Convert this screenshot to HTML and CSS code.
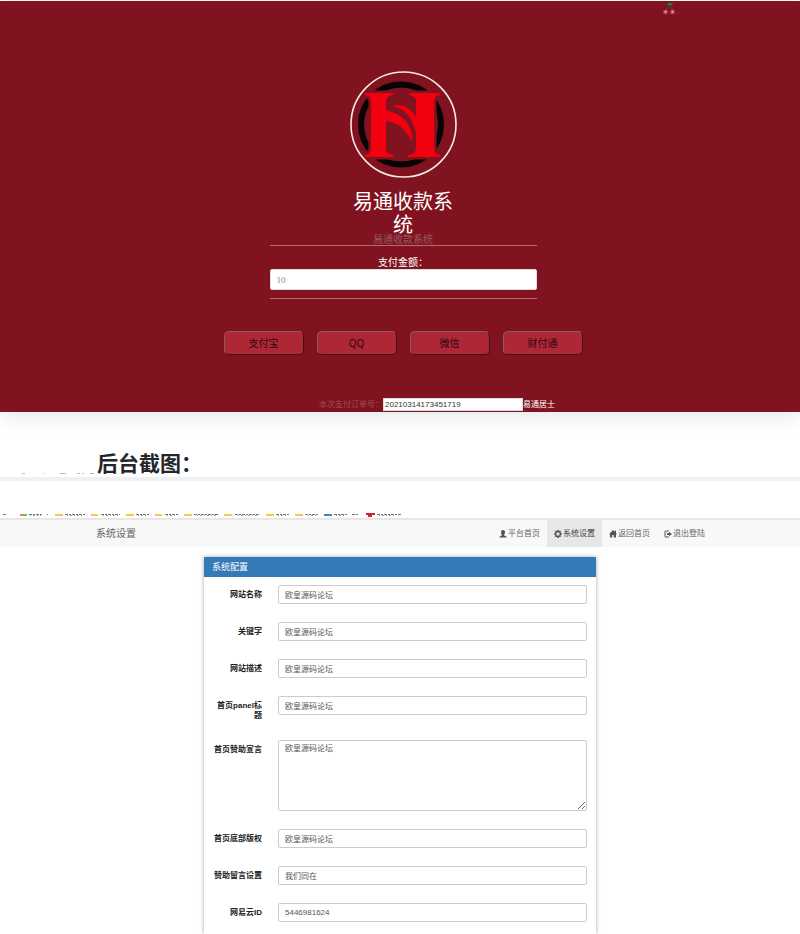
FILE: index.html
```html
<!DOCTYPE html>
<html lang="zh-CN">
<head>
<meta charset="utf-8">
<meta name="viewport" content="width=device-width, initial-scale=1">
<title>易通收款系统</title>
<link rel="stylesheet" href="styles.css">
</head>
<body>
<main class="hero">
  <svg class="cherry" viewBox="0 0 14 14" aria-hidden="true">
    <path d="M8 3 4 9M8 3l2.500 6" fill="none" stroke="#2d5a35"/>
    <path d="M5.500 3Q7 1 11 2 10 5 5.500 4z" fill="#168a4b"/>
    <circle cx="3.500" cy="11" r="2.500" fill="#b83a4b"/><circle cx="10.500" cy="11" r="2.500" fill="#b83a4b"/>
    <circle cx="3.500" cy="10.800" r="1" fill="#f3b5b8"/><circle cx="10.500" cy="10.800" r="1" fill="#f3b5b8"/>
  </svg>
  <svg class="logo" viewBox="0 0 107 107" role="img" aria-label="易通">
    <circle cx="51" cy="53.500" r="40" fill="none" stroke="#080304" stroke-width="6"/>
    <g fill="#f2000f">
      <g stroke="#81121f" stroke-width="5" paint-order="stroke">
        <path d="M15 22H43V24Q36 25 36 30V77Q36 83 43 84V86H15V84Q21 83 21 77V31Q21 25 15 24Z"/>
        <path d="M59 22H90V24Q84 25 84 31V77Q84 83 90 84V86H58V84Q66 83 66 77V30Q66 25 59 24Z"/>
      </g>
      <path d="M35 37Q37 40 42 41Q53 44 59 55Q63 63 62 71Q55 56 44 52Q40 50 35 50Z"/>
      <path d="M45 34Q56 33 61 40Q66 43 67 50V66Q63 47 54 40Q50 37 45 36Z"/>
    </g>
    <circle cx="53.500" cy="53.500" r="52.500" fill="none" stroke="#f6e9e3" stroke-width="1.600"/>
  </svg>
  <h1 class="title">易通收款系统</h1>
  <p class="subtitle">易通收款系统</p>
  <form class="pay">
    <div class="amount">
      <label for="money">支付金额：</label>
      <input id="money" type="text" placeholder="10">
    </div>
    <div class="methods">
      <button type="button">支付宝</button>
      <button type="button">QQ</button>
      <button type="button">微信</button>
      <button type="button">财付通</button>
    </div>
    <div class="order">
      <label for="order">本次支付订单号：</label>
      <input id="order" type="text" value="20210314173451719">
      <span>易通居士</span>
    </div>
  </form>
</main>

<section class="caption">
  <svg class="traces" viewBox="0 0 97 4" aria-hidden="true">
    <path d="M22 3.500h3M43 3.500h1M60 3.500h6M77 3.500h3M82 3.500h2M90 3.500h4" stroke="#bbb" fill="none"/>
  </svg>
  <h2>后台截图：</h2>
</section>

<div class="bookmarks">
  <svg viewBox="0 0 420 4" aria-hidden="true">
    <g fill="none" stroke-width="2">
      <path d="M20 2h3" stroke="#e8912d"/><path d="M23 2h4" stroke="#56c271"/>
      <path d="M55 2h8M91 2h7M126 2h8M155 2h7M184 2h8M224 2h8M266 2h8M295 2h8" stroke="#f7c94b"/>
      <path d="M324 2h8" stroke="#3e8fae"/><path d="M366 1h9M368 3h4" stroke="#cf2434"/>
      <path d="M3 1.500h3M29 1.500h13M47 1.500h1M65 1.500h20M101 1.500h19M136 1.500h13M165 1.500h14M194 1.500h25M235 1.500h25M276 1.500h13M305 1.500h13M334 1.500h14M352 1.500h6M377 1.500h25" stroke="#777" stroke-width="1" stroke-dasharray="3 1 2 1"/>
      <path d="M30 2.500h11M67 2.500h17M103 2.500h16M138 2.500h10M167 2.500h10M197 2.500h19M238 2.500h19M278 2.500h10M308 2.500h9M336 2.500h10M379 2.500h17" stroke="#999" stroke-width="1" stroke-dasharray="1 2 2 2"/>
    </g>
  </svg>
</div>

<header class="navbar">
  <a class="brand" href="#">系统设置</a>
  <nav>
    <a href="#"><svg viewBox="0 0 16 16"><path d="M8 0c3 0 4 2 4 4.500S10.500 9 10 10c0 1.500 5 1.500 5.500 5H.5C1 11.500 6 11.500 6 10 5.500 9 4 7 4 4.500S5 0 8 0z"/></svg>平台首页</a>
    <a class="active" href="#"><svg viewBox="0 0 16 16"><path fill-rule="evenodd" d="M6.500 0h3l.5 2.300 2-1.200 2.100 2.100L12.900 5l2.600 1.500v3L13 10l1.200 2.500-2.100 2.100L10 13.500 9.500 16h-3L6 13.500l-2.300 1.100-2.100-2.100L3 10l-2.500-.5v-3L3 5.500 1.600 3.200l2.100-2.100L6 2.300zM8 4.700A3.300 3.300 0 1 0 8 11.300 3.300 3.300 0 1 0 8 4.700z"/></svg>系统设置</a>
    <a href="#"><svg viewBox="0 0 16 16"><path d="m8 0 3.500 3.500V1H14v5l2 2.500h-2V15H9.500v-5h-3v5H2V8.500H0z"/></svg>返回首页</a>
    <a href="#"><svg viewBox="0 0 16 16"><path d="M10 1H4Q1 1 1 4v8q0 3 3 3h6v-2H4q-1 0-1-1V4q0-1 1-1h6zM10 4l6 4-6 4.500V10H6V6h4z"/></svg>退出登陆</a>
  </nav>
</header>

<section class="panel">
  <h3>系统配置</h3>
  <form class="settings">
    <label for="f1">网站名称</label><input id="f1" type="text" value="欧皇源码论坛">
    <label for="f2">关键字</label><input id="f2" type="text" value="欧皇源码论坛">
    <label for="f3">网站描述</label><input id="f3" type="text" value="欧皇源码论坛">
    <label for="f4">首页panel标题</label><input id="f4" type="text" value="欧皇源码论坛">
    <label for="f5">首页赞助宣言</label><textarea id="f5">欧皇源码论坛</textarea>
    <label for="f6">首页底部版权</label><input id="f6" type="text" value="欧皇源码论坛">
    <label for="f7">赞助留言设置</label><input id="f7" type="text" value="我们同在">
    <label for="f8">网易云ID</label><input id="f8" type="text" value="5446981624">
  </form>
</section>
</body>
</html>
```
FILE: styles.css
```css
* { box-sizing: border-box; }
body {
  margin: 0;
  min-height: 100vh;
  display: flex;
  flex-direction: column;
  background: #fff;
  color: #333;
  font: 8px/10px "Liberation Sans", "Noto Sans CJK SC", sans-serif;
}
h1, h2, h3, p { margin: 0; font-weight: 400; }
input, textarea, button { font: inherit; color: inherit; margin: 0; }
a { color: inherit; text-decoration: none; }

.hero {
  position: relative;
  display: flex;
  flex-direction: column;
  align-items: center;
  margin-top: 1px;
  padding: 70px 0 1px 6px;
  background: #81121f;
  box-shadow: 0 4px 20px rgba(0, 0, 0, .1);
}
.cherry { position: absolute; top: 0; left: 83%; width: 14px; height: 14px; margin-left: -2px; }
.logo { width: 107px; height: 107px; }
.title {
  width: 107px;
  margin-top: 13px;
  color: #fff;
  font-size: 20px;
  line-height: 23px;
  text-align: center;
}
.subtitle { margin-top: -3px; color: #955a60; font-size: 10px; line-height: 11px; }
.pay { display: flex; flex-direction: column; align-items: center; width: 100%; }
.amount {
  display: flex;
  flex-direction: column;
  align-items: center;
  width: 267px;
  padding: 11px 0 8px;
  border: solid #bd6872;
  border-width: 1px 0;
}
.amount label {
  color: #fff;
  font: 10px/12px "Liberation Serif", "Noto Sans CJK SC", serif;
}
.amount input {
  width: 100%;
  height: 21px;
  padding: 0 6px;
  border: 1px solid #ddd;
  border-radius: 2px;
  background: #fff;
  font: 9px/12px "Liberation Serif", serif;
}
.amount input::placeholder { color: #888; }
.methods { display: flex; gap: 13px; margin-top: 32px; }
.methods button {
  width: 80px;
  height: 24px;
  padding: 0;
  border: 1px solid;
  border-color: #8c5a5c #3c1217 #3c1217 #8c5a5c;
  border-radius: 5px;
  background: #ae2737;
  color: #2c080d;
  font: 10px/12px "Noto Sans", "Noto Sans CJK SC", sans-serif;
}
.order { display: flex; align-items: center; margin-top: 43px; padding-left: 68px; }
.order label { white-space: nowrap; color: #9c5059; }
.order input { width: 140px; height: 13px; padding: 0 1px; border: 1px solid #ddd; background: #fff; }
.order span { color: #fff; }

.caption {
  display: flex;
  align-items: flex-end;
  height: 69px;
  border-bottom: 4px solid #eef1f1;
}
.traces { width: 97px; height: 4px; margin-bottom: 3px; }
.caption h2 { color: #24262b; font-size: 21px; font-weight: 700; line-height: 26px; }
.bookmarks { padding: 32px 0 1px; border-bottom: 2px solid #e7e7e7; }
.bookmarks svg { display: block; width: 420px; height: 4px; }

.navbar {
  display: flex;
  justify-content: space-between;
  height: 27px;
  padding: 0 11% 0 12%;
  background: #f8f8f8;
  color: #666;
}
.brand { font-size: 10px; line-height: 27px; }
.navbar nav { display: flex; }
.navbar nav a { display: flex; align-items: center; gap: 1px; padding: 0 7px; }
.navbar nav svg { width: 8px; height: 8px; fill: #555; }
.navbar nav .active { background: #e7e7e7; color: #444; }

.panel {
  flex: 1;
  width: 49%;
  min-width: 390px;
  margin: 10px auto 0;
  background: #fff;
  box-shadow: 0 0 4px rgba(0, 0, 0, .35);
}
.panel h3 { padding: 0 8px; background: #337ab7; color: #fff; font-size: 9px; line-height: 20px; }
.settings {
  display: grid;
  grid-template-columns: 49px 1fr;
  gap: 18px 16px;
  align-items: start;
  padding: 8px 9px 12px;
}
.settings label {
  min-height: 25px;
  margin-bottom: -6px;
  padding: 5px 0 7px;
  color: #222;
  font-weight: 700;
  text-align: right;
  word-break: break-all;
}
.settings input, .settings textarea {
  width: 100%;
  height: 19px;
  padding: 0 6px;
  border: 1px solid #ccc;
  border-radius: 2px;
  background: #fff;
  color: #555;
}
.settings textarea { display: block; height: 71px; padding-top: 3px; resize: vertical; }
```
